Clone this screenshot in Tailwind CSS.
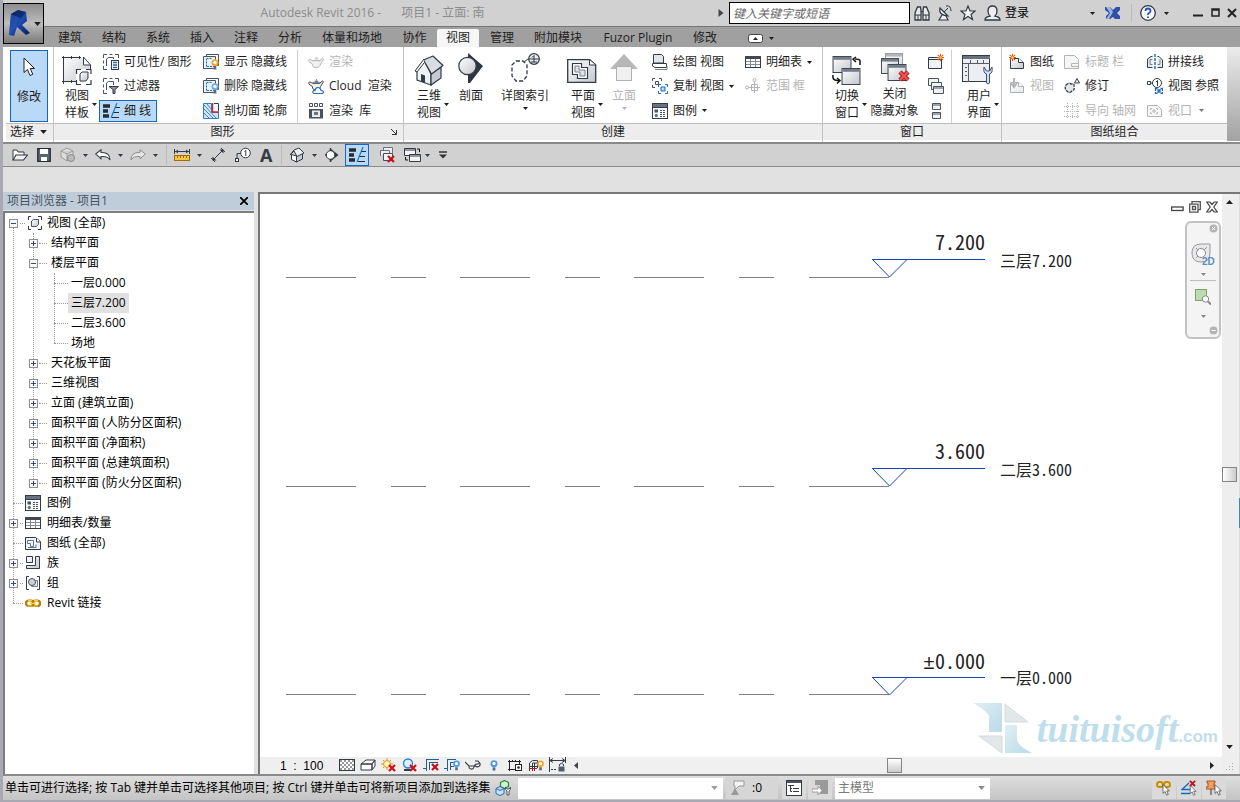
<!DOCTYPE html>
<html lang="zh-CN">
<head>
<meta charset="utf-8">
<title>Autodesk Revit 2016 - 项目1 - 立面: 南</title>
<script src="https://cdn.jsdelivr.net/npm/@tailwindcss/browser@4"></script>
</head>
<body class="flex h-screen min-h-[600px] flex-col overflow-hidden border-l-3 border-b-2 border-[#a9a9b3] bg-[#e1e1e1] font-['Open_Sans','Noto_Sans_CJK_SC',sans-serif] text-xs leading-4 text-[#1e1e1e]">

<svg width="0" height="0" class="absolute" aria-hidden="true">
  <defs>
    <linearGradient id="gr" x1="0" y1="0" x2="1" y2="1"><stop offset="0" stop-color="#fff"/><stop offset="1" stop-color="#c3c6cc"/></linearGradient>
    <linearGradient id="navy" x1="0" y1="0" x2="1" y2="1"><stop offset="0" stop-color="#0d2366"/><stop offset=".5" stop-color="#1d4bb0"/><stop offset="1" stop-color="#081a55"/></linearGradient>
    <linearGradient id="wm" x1="0" y1="0" x2="1" y2="1"><stop offset="0" stop-color="#dfeff4"/><stop offset="1" stop-color="#b9dbe7"/></linearGradient>
  </defs>
  <symbol id="down" viewBox="0 0 5 3"><path d="M0 0h5L2.500 3z" fill="currentColor"/></symbol>
  <symbol id="redx" viewBox="0 0 8 8"><path d="M1 1l6 6M7 1L1 7" stroke="#c8101c" stroke-width="2.200"/></symbol>
  <symbol id="brk" viewBox="0 0 16 16"><path d="M.5 4V.5H4M12 .5h3.500V4M.5 12v3.500H4M6.500 .5h3M.5 6.500v3" fill="none" stroke="#4a525e"/></symbol>
  <symbol id="sheet" viewBox="0 0 16 16"><path d="M1.500 4.500h8l5 4v6h-13z" fill="url(#gr)" stroke="#333b46"/><path d="M9.500 4.500v4h5" fill="#fff" stroke="#333b46"/></symbol>
  <symbol id="spark" viewBox="0 0 8 8"><path d="M4 0v8M0 4h8M1 1l6 6M7 1L1 7" stroke="#e0561a" stroke-width="1.200"/><circle cx="4" cy="4" r="1.500" fill="#ffd34a"/></symbol>
  <symbol id="win" viewBox="0 0 20 18"><rect x=".5" y=".5" width="19" height="17" fill="url(#gr)" stroke="#333b46"/><rect x="1" y="1" width="18" height="3" fill="#747c89"/></symbol>
  <symbol id="bulb" viewBox="0 0 8 12"><circle cx="4" cy="4" r="3.800" fill="currentColor"/><circle cx="4" cy="3.800" r="1.800" fill="#fff"/><rect x="2.500" y="8" width="3" height="3.500" fill="#5f6b80"/></symbol>
  <symbol id="house" viewBox="0 0 30 32"><path d="M3 14l7-9 7 14v11L3 25z" fill="#f1f2f4" stroke="#333b46" stroke-width="1.200"/><path d="M17 19l10-7v11l-10 7z" fill="#c6cad1" stroke="#333b46" stroke-width="1.200"/><path d="M9.500 5L19 1l10 9.500L17.500 19z" fill="#d9dce1" stroke="#333b46" stroke-width="1.200" stroke-linejoin="round"/><path d="M10 4L1 16l2 1 7-9" fill="#fff" stroke="#333b46" stroke-linejoin="round"/><path d="M7 19l4 1.500V28l-4-1.500z" fill="#333b46"/></symbol>
  <symbol id="legend" viewBox="0 0 16 16"><rect x=".5" y=".5" width="15" height="15" fill="#fff" stroke="#333b46"/><path d="M1 2.500h14" stroke="#6b7380" stroke-width="3"/><path d="M1 4.500h14" stroke="#333b46"/><rect x="2.500" y="6.500" width="3.500" height="3" fill="#4a525e"/><circle cx="4.300" cy="12.500" r="1.700" fill="#6b7380"/><path d="M8 7.500h6M8 9.500h6M8 11.500h6M8 13.500h6" stroke="#4a525e" stroke-dasharray="2 1"/></symbol>
  <symbol id="table" viewBox="0 0 16 14"><rect x=".5" y="1.500" width="15" height="11" fill="#fff" stroke="#333b46"/><path d="M0 2.500h16" stroke="#3f4753" stroke-width="3"/><path d="M1 6.500h14M1 9.500h14M5.500 4v8M10.500 4v8" stroke="#858b96" fill="none"/></symbol>
  <symbol id="thin" viewBox="0 0 17 16"><path d="M0 3h7M0 8h5M0 13h6" stroke="#252b35" stroke-width="3.500"/><path d="M14 0L8 15" stroke="#1878d0" stroke-width="1.200"/><path d="M12.500 4.500H17M10.500 9.500H16M9 14.500h7" stroke="#252b35"/></symbol>
  <symbol id="teapot" viewBox="0 0 17 14"><path d="M4.500 5.500C2 4 .5 4 .6 5.500S3 8 4.500 9c0 3 2 4 4.500 4s4-2 4.500-4l3-5-1-.8-3 2.300z" fill="#eef0f2" stroke="currentColor"/><path d="M5 5.500h8M7 3.500h4M8.500 2h1" stroke="currentColor"/></symbol>
  <symbol id="hid" viewBox="0 0 16 16"><path d="M3.500 2.500v-2h12v11h-2" fill="#fff" stroke="#4a525e"/><path d="M.5 2.500h12v12H.5z" fill="#e9f1fa" stroke="#4a525e"/><path d="M3.500 4.500v8M4 12.500h8M8.500 4.500H4" fill="none" stroke="#1f6fc4" stroke-dasharray="2 1"/></symbol>
  <symbol id="arrow" viewBox="0 0 12 20"><path d="M1 1v14.500l3.500-3 2.500 6 2.800-1.200-2.600-5.800h4.300z" fill="#fff" stroke="#222" stroke-linejoin="round"/></symbol>
  <symbol id="swap" viewBox="0 0 30 30"><use href="#win" width="20" height="17"/><use href="#win" x="9" y="12" width="20" height="17"/><path d="M28 9V5q0-2-5-2M24 1l-3 2 3 3M1 19q-1 6 6 5.500M5 22l3 2.500-3 3" fill="none" stroke="#111" stroke-width="1.500"/></symbol>
  <symbol id="section" viewBox="0 0 26 32"><path d="M10 0l15 13L12 30h-2z" fill="#2d3541"/><circle cx="9.500" cy="13" r="8.700" fill="url(#gr)" stroke="#333b46" stroke-width="1.200"/></symbol>
  <symbol id="plus" viewBox="0 0 9 9"><rect x=".5" y=".5" width="8" height="8" fill="#f8f8f8" stroke="#8e8f8f"/><path d="M2 4.500h5M4.500 2v5" stroke="#2a4a9a"/></symbol>
  <symbol id="minus" viewBox="0 0 9 9"><rect x=".5" y=".5" width="8" height="8" fill="#f8f8f8" stroke="#8e8f8f"/><path d="M2 4.500h5" stroke="#2a4a9a"/></symbol>
  <symbol id="marker" viewBox="0 0 16 16"><rect x=".5" y="11.500" width="3" height="3" fill="#fff" stroke="#333b46"/><path d="M2 11V6.500h3.500" fill="none" stroke="#333b46"/><circle cx="10.500" cy="6" r="4.800" fill="#fff" stroke="#333b46"/><path d="M9.500 4.500l1.300-1V9" fill="none" stroke="#333b46"/></symbol>
  <symbol id="headmark" viewBox="0 0 114 19"><path d="M0 .5h113M.5 .5l17 17.500L35 .5" fill="none" stroke="#1546b8"/></symbol>
</svg>

<header class="relative shrink-0">
  <div class="flex h-[27px] items-center border-b border-[#757575] bg-[#d1d1d1]">
    <h1 class="flex flex-1 justify-center gap-5 pl-6 text-[#8b8b8b]"><span>Autodesk Revit 2016 -</span><span>项目1 - 立面: 南</span></h1>
    <div class="flex w-[522px] items-center">
      <svg class="mr-[5px] h-2 w-1.5" viewBox="0 0 5 8"><path d="M0 0v8l5-4z" fill="#444"/></svg>
      <input aria-label="搜索" placeholder="键入关键字或短语" class="h-[22px] w-[181px] border border-black bg-white px-[3px] text-xs italic placeholder:text-[#666]">
      <button aria-label="搜索帮助" class="ml-1"><svg class="h-4 w-4" viewBox="0 0 16 16"><path d="M1 15V8l2.500-6h3l.5 4v9zM15 15V8l-2.500-6h-3L9 6v9z" fill="#e8e8e8" stroke="#333b46" stroke-width="1.300"/><path d="M1 10h6M9 10h6M7 6.500h2M4 10v5M12 10v5" stroke="#333b46"/></svg></button>
      <button aria-label="通讯中心" class="ml-[7px]"><svg class="h-4 w-4" viewBox="0 0 16 16"><path d="M3 3q-2 7 8 8L3 3zM5 10l-3 5h9l-2-4" fill="#eee" stroke="#333b46" stroke-width="1.200"/><path d="M7 7l4-4M9 1q5-1 5 5" stroke="#333b46" fill="none"/></svg></button>
      <button aria-label="收藏夹" class="ml-[7px]"><svg class="h-4 w-4" viewBox="0 0 16 16"><path d="M8 1l2 5h5l-4 3.500 1.500 5L8 11.500 3.500 14.500 5 9.500 1 6h5z" fill="#f4f4f4" stroke="#333b46" stroke-width="1.200"/></svg></button>
      <button class="ml-2 flex items-center gap-1 text-black"><svg class="h-4 w-[17px]" viewBox="0 0 17 16"><path d="M1 15q0-3 5-4-2-2-2-5 0-5 4.500-5T13 6q0 3-2 5 5 1 5 4z" fill="#eee" stroke="#333b46" stroke-width="1.300"/></svg>登录</button>
      <span class="flex-1"></span>
      <svg class="h-[3px] w-[5px]"><use href="#down"/></svg>
      <button aria-label="Exchange" class="ml-2.5"><svg class="h-3.5 w-4" viewBox="0 0 16 14"><path d="M0 1h5l3 3 3-3h4v3l-3 3 3 3v3h-5l-2-2-3 2H1v-3l3-3-4-3z" fill="#2d50a8"/><path d="M1 1h4l3 5-4 7H1l4-6z" fill="#9db2dc"/></svg></button>
      <span class="ml-2.5 h-[18px] border-l border-[#bbb]"></span>
      <button aria-label="帮助" class="ml-2"><svg class="h-4 w-4" viewBox="0 0 16 16"><circle cx="8" cy="8" r="7.300" fill="#f6f6f6" stroke="#333b46" stroke-width="1.300"/><path d="M5.500 6q0-2.500 2.500-2.500T10.500 6q0 1.200-1.500 2T8 10M8 11.500v1.500" fill="none" stroke="#2355b8" stroke-width="1.800"/></svg></button>
      <svg class="ml-2 h-[3px] w-[5px]"><use href="#down"/></svg>
      <button aria-label="最小化" class="ml-6"><svg class="h-3 w-2.5" viewBox="0 0 10 12"><path d="M0 8.500h10" stroke="#222" stroke-width="2"/></svg></button>
      <button aria-label="最大化" class="ml-2"><svg class="h-2.5 w-2.5" viewBox="0 0 10 10"><path d="M1 1h7v7H1zM1 2h7" stroke="#222" fill="none" stroke-width="1.500"/></svg></button>
      <button aria-label="关闭" class="mr-[3px] ml-1.5"><svg class="h-2.5 w-2.5" viewBox="0 0 10 10"><path d="M1 1l8 8M9 1L1 9" stroke="#222" stroke-width="2"/></svg></button>
    </div>
  </div>

  <nav class="flex h-5 items-end bg-[#a0a0a0] pl-[45px] whitespace-nowrap">
    <button class="h-[18px] w-11">建筑</button><button class="h-[18px] w-11">结构</button><button class="h-[18px] w-11">系统</button><button class="h-[18px] w-11">插入</button><button class="h-[18px] w-11">注释</button><button class="h-[18px] w-11">分析</button><button class="h-[18px] w-20">体量和场地</button><button class="h-[18px] w-[45px]">协作</button>
    <button class="h-[18px] w-[42px] rounded-t-xs bg-[#f6f6f6]">视图</button>
    <button class="h-[18px] w-[46px]">管理</button><button class="h-[18px] w-[66px]">附加模块</button><button class="h-[18px] w-[94px]">Fuzor Plugin</button><button class="h-[18px] w-10">修改</button>
    <button aria-label="最小化功能区" class="ml-[23px] flex h-[18px] items-center gap-1.5"><svg class="h-[9px] w-[15px]" viewBox="0 0 15 9"><rect x=".5" y=".5" width="14" height="8" rx="2" fill="#fff" stroke="#444"/><path d="M5 6h5L7.500 3z" fill="#222"/></svg><svg class="h-[3px] w-[5px]"><use href="#down"/></svg></button>
  </nav>

  <button aria-label="应用程序菜单" class="absolute top-[3px] left-0 flex h-[41px] w-[41px] items-center border border-black bg-linear-to-b from-[#8e8e8e] via-[#bdbdbd] to-[#7a7a7a]">
    <svg class="ml-[5px] h-[27px] w-[22px]" viewBox="0 0 22 27"><path d="M2 4l7-4 8 2 1 9-5 4 8 8-4 2-9-8-3 9-5-1z" fill="url(#navy)"/><path d="M2 4l7-4 8 2-5 6z" fill="#0a1f5c" opacity=".6"/><path d="M2 4l8 4-4 10-6 7z" fill="#2a5cc0" opacity=".5"/></svg>
    <svg class="ml-[3px] h-1 w-[7px]"><use href="#down"/></svg>
  </button>
</header>

<section class="flex h-[97px] shrink-0 border-b-2 border-[#8a8a8a] bg-white whitespace-nowrap">
  <div class="flex w-[50px] flex-col">
    <div class="flex h-[76px] pt-[3px] pl-[7px]"><button class="flex h-[72px] w-[38px] flex-col items-center border border-[#1767c0] bg-[#b9d9f6] pt-1.5"><svg class="h-5 w-3"><use href="#arrow"/></svg><span class="mt-3">修改</span></button></div>
    <button class="ml-[3px] flex h-[17px] items-center gap-1.5 border-t border-[#bdbdbd] bg-[#ededed] pl-1">选择<svg class="h-1 w-[7px]"><use href="#down"/></svg></button>
  </div>

  <div class="flex w-[350px] flex-col border-l border-[#c4c4c4]">
    <div class="flex h-[76px] pt-[3px]">
      <button class="ml-[7px] w-[38px] pt-[3px] leading-[17px]"><svg class="h-8 w-8" viewBox="0 0 32 32"><path d="M3 3h19l7 7v17H3z" fill="url(#gr)"/><path d="M1 2.500h19M1 26.500h15M2.500 1v28M10.500 1v3M18.500 1v3M10.500 25v3" fill="none" stroke="#333b46"/><path d="M22.500 2v8h7z" fill="#fff" stroke="#333b46"/><path d="M29.500 10v5" stroke="#333b46"/><path d="M15 14h15v15H15z" fill="#fff"/><path d="M15.500 19v-4.500H20M25 14.500h5V19M15.500 25v4.500H20M25 29.500h5V25" fill="none" stroke="#333b46" stroke-width="1.200"/><path d="M19 19l2-2h6v6l-2 3h-6z" fill="url(#gr)" stroke="#333b46"/></svg><span class="flex items-center gap-[3px] pl-1"><span>视图<br>样板</span><svg class="h-[3px] w-[5px] shrink-0"><use href="#down"/></svg></span></button>
      <div class="grid w-[104px] grid-rows-3">
        <button class="flex items-center gap-[5px] pl-1"><svg class="h-4 w-4" viewBox="0 0 16 16"><use href="#brk"/><path d="M3.500 12V5l2-1.500h5V5" fill="none" stroke="#4a525e"/><rect x="8.500" y="6.500" width="7" height="9" fill="#fff" stroke="#333b46"/><path d="M10 8.500h4M10 11h4M10 13.500h4" stroke="#1c6ac0" stroke-width="1.300"/></svg>可见性/ 图形</button>
        <button class="flex items-center gap-[5px] pl-1"><svg class="h-4 w-4" viewBox="0 0 16 16"><use href="#brk"/><path d="M3.500 12V5l2-1.500h5V7" fill="none" stroke="#4a525e"/><path d="M6 8.500h9.500l-3.500 3v4h-2v-4z" fill="#8b929e" stroke="#333b46"/></svg>过滤器</button>
        <button aria-pressed="true" class="my-px flex w-[58px] items-center gap-1 border border-[#1767c0] bg-[#b9d9f6] pl-[3px]"><svg class="h-4 w-[17px]"><use href="#thin"/></svg>细 线</button>
      </div>
      <div class="grid w-[94px] grid-rows-3">
        <button class="flex items-center gap-[5px]"><svg class="h-4 w-4 text-[#f5a623]" viewBox="0 0 16 16"><use href="#hid"/><use href="#bulb" x="8" y="5" width="8" height="11"/></svg>显示 隐藏线</button>
        <button class="flex items-center gap-[5px]"><svg class="h-4 w-4 text-[#6aaeea]" viewBox="0 0 16 16"><use href="#hid"/><use href="#bulb" x="8" y="5" width="8" height="11"/></svg>删除 隐藏线</button>
        <button class="flex items-center gap-[5px]"><svg class="h-4 w-4" viewBox="0 0 16 16"><path d="M.5 .5h8v9h7v6H.5z" fill="#cfe6fa" stroke="#2b7fd0"/><path d="M1 2l12 13M1 6l9 9M1 10l5 5M4 1l4 5" stroke="#4f7fae"/><path d="M9.500 0v9H16" fill="none" stroke="#d0232b" stroke-width="1.500"/><path d="M11 .5h4.500V8" fill="none" stroke="#333b46"/></svg>剖切面 轮廓</button>
      </div>
      <div class="grid w-[105px] grid-rows-3 border-l border-[#d0d0d0] pl-2.5">
        <button disabled class="flex items-center gap-[5px] text-[#b4b4b4]"><svg class="h-3.5 w-4"><use href="#teapot"/></svg>渲染</button>
        <button class="flex items-center gap-[5px]"><svg class="h-4 w-4 text-[#333b46]" viewBox="0 0 16 16"><use href="#teapot" width="16" height="13"/><path d="M6 15.500q-2-1-.5-3 1-.5 1.500 0 .5-3 3-3t3 3q2.500 0 2.500 2l-1 1z" fill="#fff" stroke="#1c6ac0" stroke-width="1.200"/></svg>Cloud&nbsp; 渲染</button>
        <button class="flex items-center gap-[5px]"><svg class="h-4 w-4" viewBox="0 0 16 16"><path d="M1.500 .5h3v3h-3zM6.500 .5h3v3h-3zM11.500 .5h3v3h-3z" fill="none" stroke="#4a525e"/><rect x="1" y="6" width="14" height="9.500" fill="#4a525e"/><rect x="4" y="7.500" width="8" height="6.500" fill="#e9ebee"/><path d="M6 9h4v3H6z" fill="#6b7380"/></svg>渲染&nbsp; 库</button>
      </div>
    </div>
    <div class="flex h-[17px] items-center border-t border-[#bdbdbd] bg-[#ededed]"><span class="flex-1 text-center">图形</span><button aria-label="图形显示选项" class="mr-1.5"><svg class="h-1.5 w-1.5" viewBox="0 0 6 6"><path d="M0 0l5 5M5.500 1v4.500H1" fill="none" stroke="#333"/></svg></button></div>
  </div>

  <div class="flex w-[419px] flex-col border-l border-[#c4c4c4]">
    <div class="flex h-[76px] pt-[3px]">
      <button class="ml-[9px] w-[38px] pt-[3px] leading-[17px]"><svg class="ml-px h-8 w-[30px]"><use href="#house"/></svg><span class="flex items-center gap-[3px] pl-1"><span>三维<br>视图</span><svg class="h-[3px] w-[5px] shrink-0"><use href="#down"/></svg></span></button>
      <button class="flex w-10 flex-col items-center pt-[3px] leading-[17px]"><svg class="mb-0.5 h-8 w-[26px]"><use href="#section"/></svg>剖面</button>
      <button class="ml-px flex w-[66px] flex-col items-center pt-[3px] leading-[17px]"><svg class="mb-0.5 h-8 w-8" viewBox="0 0 32 32"><path d="M7 8h7l4 4v11l-4 5H7l-4-5V12z" fill="none" stroke="#333b46" stroke-width="1.300" stroke-dasharray="4 2"/><circle cx="25" cy="6" r="5.300" fill="#eee" stroke="#333b46" stroke-width="1.200"/><path d="M19.500 6h11M15 9l4-3M23 4.500l2-2v7M22 9h6" fill="none" stroke="#333b46"/></svg>详图索引<svg class="mt-[3px] h-[3px] w-[5px]"><use href="#down"/></svg></button>
      <button class="ml-[9px] w-[37px] pt-[3px] leading-[17px]"><svg class="h-8 w-[30px]" viewBox="0 0 30 32"><path d="M.7 4.700h22l6 5v17.600h-28z" fill="url(#gr)" stroke="#333b46" stroke-width="1.300"/><path d="M22.500 5v5h6" fill="#fff" stroke="#333b46"/><path d="M5.500 8.500h9v4h6v11h-10v-4h-5z" fill="#fff" stroke="#333b46" stroke-width="1.200"/><path d="M8 11h4v4h6v6h-5v-4H8z" fill="#e0e3e7" stroke="#777f8c"/></svg><span class="flex items-center gap-[3px] pl-1"><span>平面<br>视图</span><svg class="h-[3px] w-[5px] shrink-0"><use href="#down"/></svg></span></button>
      <button disabled class="flex w-10 flex-col items-center pt-[3px] leading-[17px] text-[#b4b4b4]"><svg class="mb-0.5 h-8 w-[30px]" viewBox="0 0 30 32"><path d="M1 16L15 1l14 15z" fill="#b8b8b8"/><rect x="7.500" y="13.500" width="15" height="14" fill="#f0f0f0" stroke="#b0b0b0"/></svg>立面<svg class="mt-[3px] h-[3px] w-[5px]"><use href="#down"/></svg></button>
      <div class="ml-2 grid w-[93px] grid-rows-3">
        <button class="flex items-center gap-[5px]"><svg class="h-4 w-4" viewBox="0 0 16 16"><path d="M1.500 .5h8l2 2V9h-10z" fill="#e4e6ea" stroke="#333b46"/><path d="M.5 9.500h14v4H3L.5 12z" fill="#fff" stroke="#333b46"/><path d="M3 15.500h12V12" fill="none" stroke="#777f8c"/></svg>绘图 视图</button>
        <button class="flex items-center gap-[5px]"><svg class="h-4 w-4" viewBox="0 0 16 16"><path d="M.5 3V.5H3M7 .5h2.500V3M.5 7v2.500H3M3.500 3.500h3v3h-3z" fill="none" stroke="#4a525e"/><path d="M6.500 9V6.500H9M13 6.500h2.500V9M6.500 13v2.500H9M15.500 13v2.500H13" fill="none" stroke="#1c6ac0"/><path d="M9 9h4v4H9z" fill="#b9d9f6" stroke="#1c6ac0"/></svg>复制 视图<svg class="h-[3px] w-[5px]"><use href="#down"/></svg></button>
        <button class="flex items-center gap-[5px]"><svg class="h-4 w-4"><use href="#legend"/></svg>图例<svg class="h-[3px] w-[5px]"><use href="#down"/></svg></button>
      </div>
      <div class="grid grid-rows-3">
        <button class="flex items-center gap-[5px]"><svg class="h-3.5 w-4"><use href="#table"/></svg>明细表<svg class="h-[3px] w-[5px]"><use href="#down"/></svg></button>
        <button disabled class="flex items-center gap-[5px] text-[#b4b4b4]"><svg class="h-4 w-4" viewBox="0 0 16 16"><path d="M6.500 6.500h6v6h-6zM3 9.500h12M9.500 3v12" fill="none" stroke="#b4b4b4"/><circle cx="2" cy="9.500" r="1.500" fill="none" stroke="#b4b4b4"/><circle cx="9.500" cy="2" r="1.500" fill="none" stroke="#b4b4b4"/></svg>范围 框</button>
      </div>
    </div>
    <div class="h-[17px] border-t border-[#bdbdbd] bg-[#ededed] text-center">创建</div>
  </div>

  <div class="flex w-[179px] flex-col border-l border-[#c4c4c4]">
    <div class="flex h-[76px] pt-[3px]">
      <button class="ml-2 w-[38px] pt-[3px] leading-[17px]"><svg class="ml-px h-8 w-[30px]"><use href="#swap"/></svg><span class="flex items-center gap-[3px] pl-1"><span>切换<br>窗口</span><svg class="h-[3px] w-[5px] shrink-0"><use href="#down"/></svg></span></button>
      <button class="flex w-[51px] flex-col items-center pt-[3px] leading-[17px]"><svg class="h-8 w-[30px] shrink-0" viewBox="0 0 30 32"><g opacity=".55"><use href="#win" x="4" width="20" height="16"/></g><use href="#win" y="5" width="20" height="16"/><use href="#win" x="7" y="11" width="20" height="17"/><path d="M20 19l8 8M28 19l-8 8" stroke="#a01018" stroke-width="4.500"/><path d="M20 19l8 8M28 19l-8 8" stroke="#f0504a" stroke-width="2.500"/></svg>关闭<br>隐藏对象</button>
      <div class="grid w-[31px] grid-rows-3 place-items-center">
        <button aria-label="复制"><svg class="block h-4 w-4" viewBox="0 0 16 16"><path d="M.5 3.500h13v11H.5zM.5 5.500h13" fill="#f1f2f4" stroke="#333b46"/><use href="#spark" x="9" width="7" height="7"/></svg></button>
        <button aria-label="层叠"><svg class="block h-4 w-4" viewBox="0 0 16 16"><path d="M.5 .5h10v7H.5z" fill="#f1f2f4" stroke="#4a525e"/><path d="M3.500 4.500h10v7h-10z" fill="#f1f2f4" stroke="#4a525e"/><path d="M5.500 8.500h10v7h-10zM5.500 10h10" fill="#f1f2f4" stroke="#4a525e"/></svg></button>
        <button aria-label="平铺"><svg class="block h-4 w-4" viewBox="0 0 16 16"><path d="M4.500 .5h8v6h-8zM4.500 9.500h8v6h-8zM4.500 2h8M4.500 11h8" fill="#f1f2f4" stroke="#4a525e"/></svg></button>
      </div>
      <button class="w-[50px] border-l border-[#d0d0d0] pt-[3px] pl-[10px] text-left leading-[17px]"><svg class="h-8 w-[31px]" viewBox="0 0 31 32"><rect x=".5" y=".5" width="27" height="26" fill="#eceef1" stroke="#333b46"/><path d="M1 2.500h27" stroke="#6b7380" stroke-width="3"/><path d="M1 8.500h27M6.500 9v18M8.500 5v4M15.500 5v4M21.500 5v4M3 12.500h2M3 16.500h2M3 20.500h2" stroke="#555d68"/><path d="M22 12q-1 6 2.500 7v9q1.500 2 3 0v-9q3.500-1 2.500-7l-2.500 4h-3z" fill="#d6e0ee" stroke="#3b4f77"/></svg><span class="flex items-center gap-[3px] pl-[5px]"><span>用户<br>界面</span><svg class="h-[3px] w-[5px] shrink-0"><use href="#down"/></svg></span></button>
    </div>
    <div class="h-[17px] border-t border-[#bdbdbd] bg-[#ededed] text-center">窗口</div>
  </div>

  <div class="flex flex-1 flex-col border-l border-[#c4c4c4]">
    <div class="flex h-[76px] pt-[3px] pl-[7px]">
      <div class="grid w-[55px] grid-rows-3">
        <button class="flex items-center gap-[5px]"><svg class="h-4 w-4" viewBox="0 0 16 16"><use href="#sheet"/><use href="#spark" width="7" height="7"/></svg>图纸</button>
        <button disabled class="flex items-center gap-[5px] text-[#b4b4b4]"><svg class="h-4 w-4" viewBox="0 0 16 16"><g opacity=".4"><use href="#sheet"/></g><path d="M5 0v8M2 5l3 4 3-4" fill="none" stroke="#b4b4b4" stroke-width="2"/></svg>视图</button>
      </div>
      <div class="grid w-[83px] grid-rows-3">
        <button disabled class="flex items-center gap-[5px] text-[#b4b4b4]"><svg class="h-4 w-4" viewBox="0 0 16 16"><path d="M.5 1.500h10l4 4v9H.5zM7.500 9.500h7v3h-7z" fill="#f6f6f6" stroke="#b4b4b4"/></svg>标题 栏</button>
        <button class="flex items-center gap-[5px]"><svg class="h-4 w-4" viewBox="0 0 16 16"><path d="M2 7q3-3 5-1 4-1 3 3 1 3-2 4-3 3-5 0-3-2-1-6z" fill="#e2e4e8" stroke="#333b46" stroke-width="1.300" stroke-dasharray="3 1"/><path d="M10.500 5l2.500-4.500L15.500 5z" fill="#fff" stroke="#333b46"/></svg>修订</button>
        <button disabled class="flex items-center gap-[5px] text-[#b4b4b4]"><svg class="h-4 w-4" viewBox="0 0 16 16"><path d="M3.500 0v16M8.500 0v16M13.500 0v16M0 3.500h16M0 8.500h16M0 13.500h16" stroke="#b4b4b4" stroke-dasharray="1 1"/></svg>导向 轴网</button>
      </div>
      <div class="grid flex-1 grid-rows-3">
        <button class="flex items-center gap-[5px]"><svg class="h-4 w-4" viewBox="0 0 16 16"><path d="M5.500 13.500h-5V5L4 2.500h1.500M10.500 2.500H12L15.500 6v7.500h-5" fill="#e8eaed" stroke="#333b46"/><path d="M3 5.500h2.500M3 5.500v5h2.500M13 5.500v5h-2.500" fill="none" stroke="#777f8c"/><path d="M8 0v16" stroke="#1878d0" stroke-width="1.500" stroke-dasharray="3 1"/></svg>拼接线</button>
        <button class="flex items-center gap-[5px]"><svg class="h-4 w-4" viewBox="0 0 16 16"><path d="M.5 3.500h3v3h-3zM4 5h2" fill="#fff" stroke="#333b46"/><circle cx="10" cy="5" r="4.500" fill="#fff" stroke="#333b46"/><path d="M9 4l1.500-1.500V8" fill="none" stroke="#333b46"/><path d="M8.500 13v-2.500h2M13.500 10.500h2V13M8.500 14v1.500h2M15.500 14v1.500h-2M11 12h2v2h-2z" fill="none" stroke="#1c6ac0" stroke-width="1.300"/></svg>视图 参照</button>
        <button disabled class="flex items-center gap-[5px] text-[#b4b4b4]"><svg class="h-4 w-4" viewBox="0 0 16 16"><path d="M.5 2.500h10l4 4v7H.5z" fill="#f6f6f6" stroke="#b4b4b4"/><path d="M3.500 7V5.500H5M9 5.500h1.500V7M3.500 9v1.500H5M10.500 9v1.500H9M6 7h2v2H6z" fill="none" stroke="#b4b4b4"/></svg>视口<svg class="ml-0.5 h-[3px] w-[5px] text-[#777]"><use href="#down"/></svg></button>
      </div>
    </div>
    <div class="h-[17px] border-t border-[#bdbdbd] bg-[#ededed] text-center">图纸组合</div>
  </div>
  <div class="h-[94px] w-[13px] bg-linear-to-b from-[#ececec] to-[#a2a2a2]"></div>
</section>

<div class="flex h-[23px] shrink-0 items-center border-b border-[#8a8a8a] bg-[#d1d1d1] pl-[9px] text-[#333b46]">
  <button aria-label="打开"><svg class="h-3.5 w-4" viewBox="0 0 16 14"><path d="M1 12V2h4l1 2h6v3" fill="#fff" stroke="#333b46"/><path d="M1 12l3-5h11.500l-4 5z" fill="#f2f2f2" stroke="#333b46" stroke-width="1.200"/></svg></button>
  <button aria-label="保存" class="ml-[9px]"><svg class="h-3.5 w-3.5" viewBox="0 0 14 14"><path d="M.7 .7h12.600v12.600H.7z" fill="#5b6370" stroke="#252b35" stroke-width="1.200"/><path d="M3 1h8v5H3zM4 9h6v4H4z" fill="#fff"/></svg></button>
  <button aria-label="与中心文件同步" class="ml-[9px] flex items-center gap-[7px]"><svg class="h-4 w-4" viewBox="0 0 16 16"><path d="M1 4l6-3 6 3v6l-6 4-6-4zM1 4l6 3 6-3M7 7v7" fill="#ddd" stroke="#999"/><circle cx="11" cy="11" r="3.500" fill="#bbb" stroke="#888"/></svg><svg class="h-[3px] w-[5px]"><use href="#down"/></svg></button>
  <button aria-label="放弃" class="ml-[7px] flex items-center gap-[7px]"><svg class="h-3 w-4" viewBox="0 0 16 12"><path d="M.7 5L6 .8V3.500q9-.5 9 7.500-2-4-9-3.500v2.300z" fill="#fff" stroke="#333b46" stroke-width="1.100"/></svg><svg class="h-[3px] w-[5px]"><use href="#down"/></svg></button>
  <button aria-label="重做" class="ml-[7px] flex items-center gap-[7px]"><svg class="h-3 w-4" viewBox="0 0 16 12"><path d="M15.300 5L10 .8V3.500q-9-.5-9 7.500 2-4 9-3.500v2.300z" fill="#e8e8e8" stroke="#8c8c8c"/></svg><svg class="h-[3px] w-[5px]"><use href="#down"/></svg></button>
  <span class="ml-2 h-5 border-l border-[#bbb]"></span>
  <button aria-label="测量" class="ml-[7px] flex items-center gap-[7px]"><svg class="h-3 w-4" viewBox="0 0 16 12"><path d="M1 2.500h14M.5 0v5M15.500 0v5M4 1L2 2.500 4 4M12 1l2 1.500L12 4" fill="none" stroke="#333b46"/><rect x=".5" y="6.500" width="15" height="5" fill="#fbc540" stroke="#a06a00"/><path d="M3.500 7v2M6.500 7v2M9.500 7v2M12.500 7v2" stroke="#a06a00"/></svg><svg class="h-[3px] w-[5px]"><use href="#down"/></svg></button>
  <button aria-label="对齐尺寸标注" class="ml-2"><svg class="h-4 w-4" viewBox="0 0 16 16"><path d="M3 13L13 3M1 11l4 4M11 1l4 4" stroke="#333b46"/><path d="M2.500 13.500V9.500l4 4zM13.500 2.500v4l-4-4z" fill="#333b46"/></svg></button>
  <button aria-label="按类别标记" class="ml-[9px]"><svg class="h-4 w-4"><use href="#marker"/></svg></button>
  <button aria-label="文字" class="ml-[9px] text-lg leading-none font-bold">A</button>
  <span class="ml-[9px] h-5 border-l border-[#bbb]"></span>
  <button aria-label="默认三维视图" class="ml-[7px] flex items-center gap-[7px]"><svg class="h-4 w-4" viewBox="0 0 16 16"><path d="M2.500 7.500v5l5 2.500v-6z" fill="#fff" stroke="#333b46"/><path d="M7.500 9l6-3v6l-6 3z" fill="#c6cad1" stroke="#333b46"/><path d="M1 8l4-5 5-2 5 5-7 3.500L5 4z" fill="#eceef1" stroke="#333b46" stroke-linejoin="round"/></svg><svg class="h-[3px] w-[5px]"><use href="#down"/></svg></button>
  <button aria-label="剖面" class="ml-[7px]"><svg class="h-4 w-4" viewBox="0 0 16 16"><path d="M7 2l7.500 6L7 14z" fill="#2d3541"/><circle cx="6.500" cy="8" r="4.300" fill="#fff" stroke="#333b46"/><path d="M1 8h2M6.500 1v3M6.500 12v3" stroke="#333b46" stroke-width="1.500"/></svg></button>
  <button aria-label="细线" aria-pressed="true" class="ml-[5px] flex h-[22px] w-6 items-center justify-center border border-[#1767c0] bg-[#b9d9f6]"><svg class="h-4 w-[17px]"><use href="#thin"/></svg></button>
  <button aria-label="关闭隐藏窗口" class="ml-[10px]"><svg class="h-4 w-4" viewBox="0 0 16 16"><path d="M4.500 3V.5h9v6M1.500 9V3.500h9V6" fill="#eee" stroke="#6b7380"/><path d="M4.500 6.500h9v7h-9z" fill="#f4f4f4" stroke="#444c58"/><use href="#redx" x="8" y="8" width="8" height="8"/></svg></button>
  <button aria-label="切换窗口" class="ml-[9px] flex items-center gap-1"><svg class="h-4 w-[17px]" viewBox="0 0 17 16"><path d="M.5 1.500h11v7H.5zM.5 3h11" fill="#f4f4f4" stroke="#333b46"/><path d="M5.500 7.500h11v7h-11zM5.500 9h11" fill="#f4f4f4" stroke="#333b46"/><path d="M13 2h2.500v3M1.500 10v3H4" fill="none" stroke="#111"/></svg><svg class="h-[3px] w-[5px]"><use href="#down"/></svg></button>
  <button aria-label="自定义快速访问工具栏" class="ml-[9px]"><svg class="h-2 w-2" viewBox="0 0 8 8"><path d="M0 1h8" stroke="#333" stroke-width="1.500"/><path d="M0 3.500h8L4 7.500z" fill="#333"/></svg></button>
</div>

<main class="relative mt-[25px] flex min-h-0 flex-1">
  <aside class="mr-1 flex w-[251px] flex-col text-black">
    <div class="flex h-[18px] shrink-0 items-center justify-between bg-[#bfcddb] pr-1.5 pl-1 text-[#4a525c]"><h2>项目浏览器 - 项目1</h2><button aria-label="关闭" class="text-black"><svg class="h-2 w-2" viewBox="0 0 8 8"><path d="M0 0l8 8M8 0L0 8" stroke="currentColor" stroke-width="1.800"/></svg></button></div>
    <ul class="relative mt-px flex-1 border-t-2 border-l-2 border-[#7d7d7d] bg-white leading-5 whitespace-nowrap">
      <li class="absolute top-3 left-[8px] h-[378px] border-l border-dotted border-[#999]" aria-hidden="true"></li>
      <li><div class="relative flex h-5 items-center pl-1"><svg class="h-[9px] w-[9px]"><use href="#minus"/></svg><i class="mx-0.5 w-[5px] border-t border-dotted border-[#999]"></i><svg class="mr-1 h-4 w-4" viewBox="0 0 16 16"><path d="M1.500 5V1.500H4M11 1.500h3.500V5M1.500 11v3.500H4M11 14.500h3.500V11" fill="none" stroke="#333b46"/><path d="M4.500 6l2-1.500h5v5l-2 2h-5z" fill="url(#gr)" stroke="#4a525e"/></svg>视图 (全部)</div>
        <ul class="relative pl-6">
          <li class="absolute top-0 left-[28px] h-[250px] border-l border-dotted border-[#999]" aria-hidden="true"></li>
          <li class="relative flex h-5 items-center"><svg class="h-[9px] w-[9px]"><use href="#plus"/></svg><i class="mr-1 ml-px w-2 border-t border-dotted border-[#999]"></i>结构平面</li>
          <li><div class="relative flex h-5 items-center"><svg class="h-[9px] w-[9px]"><use href="#minus"/></svg><i class="mr-1 ml-px w-2 border-t border-dotted border-[#999]"></i>楼层平面</div>
            <ul class="relative pl-[25px]">
              <li class="absolute top-0 left-[25px] h-[70px] border-l border-dotted border-[#999]" aria-hidden="true"></li>
              <li class="flex h-5 items-center"><i class="w-[14px] border-t border-dotted border-[#999]"></i><span class="px-[3px]">一层0.000</span></li>
              <li class="flex h-5 items-center"><i class="w-[14px] border-t border-dotted border-[#999]"></i><span class="bg-[#e1e1e1] px-[3px]">三层7.200</span></li>
              <li class="flex h-5 items-center"><i class="w-[14px] border-t border-dotted border-[#999]"></i><span class="px-[3px]">二层3.600</span></li>
              <li class="flex h-5 items-center"><i class="w-[14px] border-t border-dotted border-[#999]"></i><span class="px-[3px]">场地</span></li>
            </ul></li>
          <li class="relative flex h-5 items-center"><svg class="h-[9px] w-[9px]"><use href="#plus"/></svg><i class="mr-1 ml-px w-2 border-t border-dotted border-[#999]"></i>天花板平面</li>
          <li class="relative flex h-5 items-center"><svg class="h-[9px] w-[9px]"><use href="#plus"/></svg><i class="mr-1 ml-px w-2 border-t border-dotted border-[#999]"></i>三维视图</li>
          <li class="relative flex h-5 items-center"><svg class="h-[9px] w-[9px]"><use href="#plus"/></svg><i class="mr-1 ml-px w-2 border-t border-dotted border-[#999]"></i>立面 (建筑立面)</li>
          <li class="relative flex h-5 items-center"><svg class="h-[9px] w-[9px]"><use href="#plus"/></svg><i class="mr-1 ml-px w-2 border-t border-dotted border-[#999]"></i>面积平面 (人防分区面积)</li>
          <li class="relative flex h-5 items-center"><svg class="h-[9px] w-[9px]"><use href="#plus"/></svg><i class="mr-1 ml-px w-2 border-t border-dotted border-[#999]"></i>面积平面 (净面积)</li>
          <li class="relative flex h-5 items-center"><svg class="h-[9px] w-[9px]"><use href="#plus"/></svg><i class="mr-1 ml-px w-2 border-t border-dotted border-[#999]"></i>面积平面 (总建筑面积)</li>
          <li class="relative flex h-5 items-center"><svg class="h-[9px] w-[9px]"><use href="#plus"/></svg><i class="mr-1 ml-px w-2 border-t border-dotted border-[#999]"></i>面积平面 (防火分区面积)</li>
        </ul></li>
      <li class="relative flex h-5 items-center pl-[8px]"><i class="mr-0.5 w-[10px] border-t border-dotted border-[#999]"></i><svg class="mr-1.5 h-4 w-4"><use href="#legend"/></svg>图例</li>
      <li class="relative flex h-5 items-center pl-1"><svg class="h-[9px] w-[9px]"><use href="#plus"/></svg><i class="mx-0.5 w-[3px] border-t border-dotted border-[#999]"></i><svg class="mr-1.5 h-3.5 w-4"><use href="#table"/></svg>明细表/数量</li>
      <li class="relative flex h-5 items-center pl-[8px]"><i class="mr-0.5 w-[10px] border-t border-dotted border-[#999]"></i><svg class="mr-1.5 h-4 w-4" viewBox="0 0 16 16"><path d="M.5 2.500h10l5 4v8H.5z" fill="#f1f2f4" stroke="#333b46"/><path d="M11.500 3v4h4" fill="#fff" stroke="#333b46"/><path d="M2.500 5.500h6v6h-3v-3h-3zM11 9.500v3H3" fill="none" stroke="#5d7790"/></svg>图纸 (全部)</li>
      <li class="relative flex h-5 items-center pl-1"><svg class="h-[9px] w-[9px]"><use href="#plus"/></svg><i class="mx-0.5 w-[3px] border-t border-dotted border-[#999]"></i><svg class="mr-1.5 h-4 w-4" viewBox="0 0 16 16"><path d="M1.500 1.500h6v6h-6zM10.500 1.500h4v12h-13V10.500h9z" fill="url(#gr)" stroke="#333b46"/></svg>族</li>
      <li class="relative flex h-5 items-center pl-1"><svg class="h-[9px] w-[9px]"><use href="#plus"/></svg><i class="mx-0.5 w-[3px] border-t border-dotted border-[#999]"></i><svg class="mr-1.5 h-4 w-4" viewBox="0 0 16 16"><path d="M4 1.500H1.500v13H4M12 1.500h2.500v13H12" fill="none" stroke="#333b46"/><path d="M6.500 5.500h6v6h-6z" fill="#e6e8eb" stroke="#777f8c"/><circle cx="7" cy="7" r="3.500" fill="#cfd3d9" stroke="#4a525e"/></svg>组</li>
      <li class="relative flex h-5 items-center pl-[8px]"><i class="mr-0.5 w-[10px] border-t border-dotted border-[#999]"></i><svg class="mr-1.5 h-4 w-4" viewBox="0 0 16 16"><rect x="1" y="5.500" width="7.500" height="5.500" rx="2.700" fill="none" stroke="#b57a00" stroke-width="2.200"/><rect x="7.500" y="5.500" width="7.500" height="5.500" rx="2.700" fill="none" stroke="#b57a00" stroke-width="2.200"/><path d="M3 5.500h4M9 5.500h4M5 8.300h6M3 11h4M9 11h4" stroke="#ffd23a" stroke-width="1.200"/></svg>Revit 链接</li>
    </ul>
  </aside>

  <section class="flex min-w-0 flex-1 border-t-2 border-l-2 border-[#777]">
    <div class="flex min-w-0 flex-1 flex-col">
      <div class="relative min-h-0 flex-1 overflow-hidden bg-white">
        <svg class="absolute inset-0 h-full w-full font-['Noto_Sans_Mono_CJK_SC','Noto_Sans_CJK_SC',monospace]" role="img" aria-label="标高">
          <g stroke="#808080" fill="none">
            <path d="M26 83.500h70M131 83.500h35M200 83.500h70M305 83.500h35M374 83.500h70M479 83.500h35M549 83.500h80"/>
            <path d="M26 292.500h70M131 292.500h35M200 292.500h70M305 292.500h35M374 292.500h70M479 292.500h35M549 292.500h80"/>
            <path d="M26 500.500h70M131 500.500h35M200 500.500h70M305 500.500h35M374 500.500h70M479 500.500h35M549 500.500h80"/>
          </g>
          <use href="#headmark" x="612" y="65" width="114" height="19"/>
          <use href="#headmark" x="612" y="274" width="114" height="19"/>
          <use href="#headmark" x="612" y="483" width="114" height="19"/>
          <g font-size="20" text-anchor="end" fill="#222"><text x="725" y="56">7.200</text><text x="725" y="265">3.600</text><text x="725" y="475"><tspan font-family="Liberation Mono">±</tspan>0.000</text></g>
          <g font-size="16" fill="#222"><text x="740" y="73">三层7.200</text><text x="740" y="282">二层3.600</text><text x="740" y="490">一层0.000</text></g>
        </svg>
        <div class="absolute top-[7px] right-[4px] flex items-center gap-[5px]">
          <button aria-label="最小化视图"><svg class="h-3 w-[13px]" viewBox="0 0 13 12"><rect x=".6" y="6" width="11.500" height="3.500" fill="#fff" stroke="#444" stroke-width="1.300"/></svg></button>
          <button aria-label="还原视图"><svg class="h-3 w-3" viewBox="0 0 12 12"><path d="M3 3V.7h8.300v8H9M.7 3.200H9v8H.7zM3.500 5.500h3v3h-3z" fill="none" stroke="#555" stroke-width="1.300"/></svg></button>
          <button aria-label="关闭视图"><svg class="h-3 w-3" viewBox="0 0 12 12"><path d="M.8 1h3L6 3.500 8.200 1h3L7.800 6l3.400 5h-3L6 8.500 3.800 11h-3L4.200 6z" fill="#fff" stroke="#444" stroke-width="1.200"/></svg></button>
        </div>
        <div class="absolute top-[27px] right-px flex h-[118px] w-9 flex-col items-center rounded-md border-2 border-[#c2c2c2] bg-[#f4f4f4] text-[#888]">
          <button aria-label="关闭导航栏" class="mt-px mr-px self-end"><svg class="block h-[9px] w-[9px]" viewBox="0 0 9 9"><circle cx="4.500" cy="4.500" r="4" fill="#b5b5b5"/><path d="M3 3l3 3M6 3L3 6" stroke="#fff"/></svg></button>
          <button aria-label="二维控制盘" class="mt-2.5 flex flex-col items-center gap-1.5"><svg class="h-6 w-6" viewBox="0 0 24 24"><path d="M10 1h9v9q0 9-9 9T1 10t9-9z" fill="#e6e8ec" stroke="#999"/><circle cx="10" cy="10" r="4.500" fill="#fff" stroke="#888"/><path d="M5 15l2-2M13 7l3-3M5 5l2 2" stroke="#999"/><text x="11" y="22" font-size="10" font-weight="700" fill="#5d8fc5" font-family="Liberation Sans">2D</text></svg><svg class="h-[3px] w-[5px]"><use href="#down"/></svg></button>
          <span class="mt-1 w-[26px] border-t border-[#bbb]"></span>
          <button aria-label="缩放" class="mt-2 flex flex-col items-center gap-[10px]"><svg class="h-4 w-4" viewBox="0 0 16 16"><rect x=".5" y=".5" width="11" height="11" fill="#bcdcae" stroke="#7ba36a"/><circle cx="10.500" cy="10" r="3.200" fill="#fff" stroke="#888"/><path d="M13 12.500l3 3" stroke="#888" stroke-width="2"/></svg><svg class="h-[3px] w-[5px]"><use href="#down"/></svg></button>
          <button aria-label="导航栏选项" class="mt-2 mr-px self-end"><svg class="block h-[9px] w-[9px]" viewBox="0 0 9 9"><circle cx="4.500" cy="4.500" r="4" fill="#b5b5b5"/><path d="M2.500 4.500h4" stroke="#fff"/></svg></button>
        </div>
        <div class="absolute right-1 bottom-[3px] flex items-center gap-[3px]">
          <svg class="h-[51px] w-[61px]" viewBox="0 0 61 51"><path d="M0 0h29v29H16V13Q15 9 0 0z" fill="url(#wm)"/><path d="M32 1l23 18H32zM6 33h23v17z" fill="#e2e7e9" stroke="#cfdde2"/><path d="M32 22h12v15q1 6 15 13H32z" fill="url(#wm)"/></svg>
          <span class="font-['Liberation_Serif',serif] text-[38px] leading-none font-bold text-[#bfdeeb] italic">tuituisoft<span class="font-['Liberation_Sans',sans-serif] text-[17px] not-italic">.com</span></span>
        </div>
      </div>
      <div class="flex h-[17px] shrink-0 items-center bg-[#efefef] pl-5">
        <button class="w-[46px] text-left font-['Liberation_Sans',sans-serif] whitespace-pre text-black">1  :  100</button>
        <div class="ml-[13px] flex items-center gap-[5px] pb-0.5">
          <button aria-label="详细程度"><svg class="block h-3 w-4" viewBox="0 0 16 12"><rect x=".5" y=".5" width="15" height="11" fill="#fff" stroke="#333b46"/><path d="M1 2h14M1 6h14M1 10h14" stroke="#999" stroke-width="2" stroke-dasharray="2 2"/><path d="M3 4h12M3 8h12" stroke="#999" stroke-width="2" stroke-dasharray="2 2"/></svg></button>
          <button aria-label="视觉样式"><svg class="block h-3 w-4" viewBox="0 0 16 12"><path d="M1 5l5-4h9l-3 4zM1 5h11v6H1zM12 5l3-4v6l-3 4z" fill="#fff" stroke="#333b46"/></svg></button>
          <button aria-label="日光路径"><svg class="block h-3.5 w-4" viewBox="0 0 16 14"><path d="M6 0v12M0 6h12M2 2l8 8M10 2l-8 8" stroke="#e09a1a"/><circle cx="6" cy="6" r="3.500" fill="#fff3b8" stroke="#e09a1a"/><use href="#redx" x="7" y="6" width="8" height="8"/></svg></button>
          <button aria-label="阴影"><svg class="block h-3.5 w-4" viewBox="0 0 16 14"><circle cx="6" cy="5.500" r="4.500" fill="#dceefc" stroke="#2b7fd0" stroke-width="1.300"/><path d="M2 12h7" stroke="#333b46" stroke-width="2"/><use href="#redx" x="7" y="6" width="8" height="8"/></svg></button>
          <button aria-label="裁剪视图"><svg class="block h-3.500 w-4" viewBox="0 0 16 14"><path d="M0 10.500h4M3 1.500h13M3.500 1v12M6.500 4v8M6 4.500h9" fill="none" stroke="#1f5f9a"/><use href="#redx" x="8" y="5" width="8" height="8"/></svg></button>
          <button aria-label="显示裁剪区域"><svg class="block h-3.5 w-4 text-[#4b9ae6]" viewBox="0 0 16 14"><path d="M0 10.500h4M3 1.500h9M3.500 1v12M6.500 4v8M6 4.500h4M6 8.500h4" fill="none" stroke="#1f5f9a"/><use href="#bulb" x="9" y="2" width="7" height="11"/></svg></button>
          <button aria-label="临时隐藏/隔离"><svg class="block h-3.5 w-4" viewBox="0 0 16 14"><path d="M0 4l4 4a2.500 2.500 0 0 0 5 1l1-2a2.500 2.500 0 0 0 5-1.500l-2-2.500h-3M4 8l5 0M10 6.500l5-1" fill="none" stroke="#333b46" stroke-width="1.100"/></svg></button>
          <button aria-label="显示隐藏的图元"><svg class="block h-3.5 w-4 text-[#4b9ae6]" viewBox="0 0 16 14"><use href="#bulb" x="4" y="2" width="8" height="11"/></svg></button>
          <button aria-label="临时视图属性"><svg class="block h-3.5 w-4" viewBox="0 0 16 14"><path d="M1 3.500h13M1 11.500h7M2.500 2v11M12.500 2v4M5.500 2v2M8.500 2v2" fill="none" stroke="#222"/><rect x="8.500" y="6.500" width="6" height="6" fill="#fff" stroke="#222"/><circle cx="11.500" cy="9.500" r="1.300" fill="#222"/></svg></button>
          <button aria-label="显示分析模型"><svg class="block h-3.5 w-4 text-[#f5a623]" viewBox="0 0 16 14"><path d="M1.500 13V5l3-2.500h5V10M4.500 13V5h5M1 8.500h8M6.500 5v8" fill="none" stroke="#333b46"/><path d="M1 10.500h8" stroke="#c8101c"/><use href="#bulb" x="9" y="2" width="7" height="11"/></svg></button>
          <button aria-label="显示约束"><svg class="block h-4 w-[17px]" viewBox="0 0 17 16"><path d="M.5 0v15M16.500 0v6M1 3.500h15M4 1.500l-3 2 3 2M13 1.500l3 2-3 2" fill="none" stroke="#333b46"/><path d="M2 12.500h6" stroke="#333b46" stroke-dasharray="2 1"/><rect x="9.500" y="9.500" width="6" height="5" fill="#555d68"/><path d="M10.500 9V7.500q2-2.500 4 0V9" fill="none" stroke="#333b46"/></svg></button>
        </div>
        <div class="ml-2 flex h-full flex-1 items-center justify-between bg-[#f0f0f0] pr-2">
          <button aria-label="向左滚动"><svg class="block h-[7px] w-1" viewBox="0 0 4 7"><path d="M4 0v7L0 3.500z" fill="#444"/></svg></button>
          <span class="flex h-full flex-1 items-center justify-center"><i class="h-[15px] w-[15px] border border-[#858585] bg-linear-to-b from-white to-[#ccc]"></i></span>
          <button aria-label="向右滚动"><svg class="block h-[7px] w-1" viewBox="0 0 4 7"><path d="M0 0v7l4-3.500z" fill="#222"/></svg></button>
        </div>
      </div>
    </div>
    <div class="flex w-[18px] flex-col items-center justify-between border-r border-[#ddd] bg-[#eee] pt-1.5 pr-0.5">
      <button aria-label="向上滚动"><svg class="block h-1 w-[7px]" viewBox="0 0 7 4"><path d="M0 4h7L3.500 0z" fill="#222"/></svg></button>
      <i class="h-[15px] w-[15px] border border-[#858585] bg-linear-to-r from-white to-[#ccc]"></i>
      <div class="flex flex-col items-center gap-[9px]"><button aria-label="向下滚动"><svg class="block h-1 w-[7px]"><use href="#down"/></svg></button><svg class="h-4 w-3" viewBox="0 0 12 16"><path d="M8.500 5v9M5.500 8v6M2.500 11v3" stroke="#aaa" stroke-dasharray="1 2"/></svg></div>
    </div>
  </section>
  <i class="absolute top-[306px] right-0 h-[30px] w-px bg-[#2a8fc4]"></i>
</main>

<footer class="flex h-[26px] shrink-0 items-center border-t-2 border-[#8a8a8a] bg-linear-to-b from-[#dedede] to-[#c4c4c4] text-black">
  <p class="ml-0.5 w-[485px] overflow-hidden whitespace-nowrap">单击可进行选择; 按 Tab 键并单击可选择其他项目; 按 Ctrl 键并单击可将新项目添加到选择集</p>
  <button aria-label="工作集" class="ml-[5px]"><svg class="block h-4 w-4" viewBox="0 0 16 16"><path d="M5.500 2.500l4-2 4 2v4l-4 2-4-2z" fill="#d5efd5" stroke="#1e8a2e" stroke-width="1.200"/><path d="M1 8.500l4-2 4 2v5l-4 2-4-2zM1 8.500l4 2 4-2" fill="#cfe3f7" stroke="#1c6ac0"/><path d="M10.500 7q-.5 3 1.500 4v4h2v-4q2-1 1.500-4L14 9h-2z" fill="#fff" stroke="#4a525e"/></svg></button>
  <select aria-label="工作集列表" class="ml-[7px] h-[21px] w-[205px] appearance-none bg-white"><option></option></select>
  <svg class="pointer-events-none -ml-3 h-1 w-[7px] text-[#999]"><use href="#down"/></svg>
  <div class="ml-2 flex h-[22px] w-[52px] items-center gap-1.5 bg-[#d6d6d6] pl-1"><svg class="h-4 w-4" viewBox="0 0 16 16"><path d="M4 1h10v5H9L5 10V6H4z" fill="#f2f2f2" stroke="#9a9a9a"/><path d="M1 15l4-7 4 7z" fill="#9a9a9a"/></svg>:0</div>
  <button aria-label="设计选项" class="ml-1 flex h-[22px] w-6 items-center justify-center bg-[#dadada]"><svg class="h-4 w-4" viewBox="0 0 16 16"><rect x=".5" y=".5" width="15" height="15" fill="#fff" stroke="#333b46"/><path d="M1 2h14" stroke="#4a525e" stroke-width="2"/><path d="M2 5.500h6M7 8.500h6M7 11.500h6" stroke="#333b46" stroke-width="1.200"/><path d="M4.500 6v5.500H6M4.500 8.500H6" fill="none" stroke="#333b46"/></svg></button>
  <button aria-label="添加到集" disabled class="ml-0.5 flex h-[22px] w-6 items-center justify-center bg-[#dadada]"><svg class="h-4 w-4" viewBox="0 0 16 16"><path d="M3 0h13v14H8V5H3z" fill="#9a9a9a"/><path d="M0 9h6V6l4 4.500L6 15v-3H0z" fill="#fff" stroke="#9a9a9a"/></svg></button>
  <select aria-label="活动设计选项" class="ml-[3px] h-[21px] w-[155px] appearance-none bg-white px-[3px] text-[#7a7a7a]"><option>主模型</option></select>
  <svg class="pointer-events-none -ml-3 h-1 w-[7px] text-[#888]"><use href="#down"/></svg>
  <span class="flex-1"></span>
  <div class="flex items-center gap-px pr-3.5">
    <button aria-label="选择链接" class="flex h-[22px] w-6 items-center justify-center bg-[#dadada]"><svg class="h-4 w-4" viewBox="0 0 16 16"><rect x="1" y="2" width="6" height="5" rx="2.500" fill="none" stroke="#c89000" stroke-width="2"/><rect x="8" y="2" width="6" height="5" rx="2.500" fill="none" stroke="#c89000" stroke-width="2"/><use href="#arrow" x="6" y="4" width="8" height="12"/></svg></button>
    <button aria-label="选择基线图元" class="flex h-[22px] w-6 items-center justify-center bg-[#dadada]"><svg class="h-4 w-4" viewBox="0 0 16 16"><path d="M8 3L1 9.500h9M0 13.500h9" fill="none" stroke="#1c6ac0" stroke-width="1.500"/><use href="#redx" x="8" width="7" height="7"/><use href="#arrow" x="8" y="5" width="8" height="11"/></svg></button>
    <button aria-label="选择锁定图元" class="flex h-[22px] w-6 items-center justify-center bg-[#dadada]"><svg class="h-4 w-4" viewBox="0 0 16 16"><path d="M1 1h8v2H8v4h2v2H0V7h2V3H1z" fill="#f0a060" stroke="#b0501a"/><path d="M5 9v6" stroke="#333b46"/><use href="#arrow" x="8" y="4" width="8" height="12"/></svg></button>
  </div>
</footer>
</body>
</html>
